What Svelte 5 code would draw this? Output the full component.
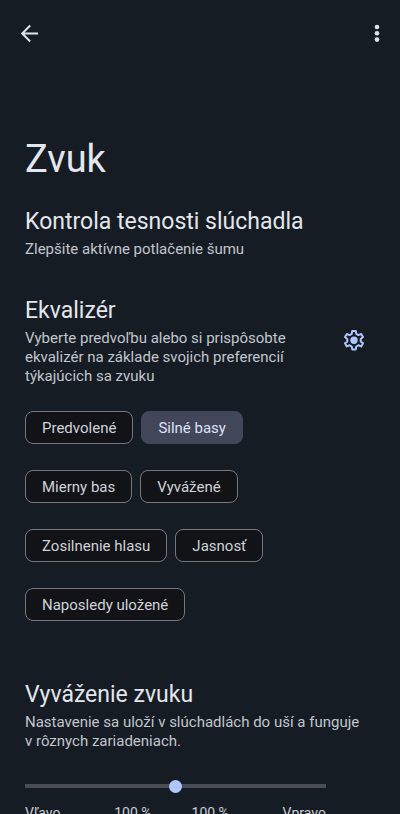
<script lang="ts">
  const presets = [
    'Predvolené',
    'Silné basy',
    'Mierny bas',
    'Vyvážené',
    'Zosilnenie hlasu',
    'Jasnosť',
    'Naposledy uložené',
  ]

  let selected = $state('Silné basy')
  let balance = $state(50)

  let left = $derived(Math.min(100, (100 - balance) * 2))
  let right = $derived(Math.min(100, balance * 2))
</script>

<div class="screen">
  <header class="bar">
    <button class="icon" aria-label="Späť">
      <svg viewBox="0 0 24 24" width="24" height="24" fill="none" stroke="currentColor" stroke-width="2">
        <path d="M20 12.5H4.5M12.2 4.5l-8 8 8 8" />
      </svg>
    </button>
    <button class="icon" aria-label="Ďalšie možnosti">
      <svg viewBox="0 0 24 24" width="24" height="24" fill="currentColor">
        <circle cx="12" cy="6" r="2.3" />
        <circle cx="12" cy="12.3" r="2.3" />
        <circle cx="12" cy="18.6" r="2.3" />
      </svg>
    </button>
  </header>

  <main>
    <h1>Zvuk</h1>

    <section class="seal">
      <h2>Kontrola tesnosti slúchadla</h2>
      <p>Zlepšite aktívne potlačenie šumu</p>
    </section>

    <section class="equalizer">
      <div class="row">
        <div class="text">
          <h2>Ekvalizér</h2>
          <p>Vyberte predvoľbu alebo si prispôsobte ekvalizér na základe svojich preferencií týkajúcich sa zvuku</p>
        </div>
        <button class="icon gear" aria-label="Nastavenia ekvalizéra">
          <svg viewBox="0 0 24 24" width="24" height="24">
            <path
              fill="none" stroke="currentColor" stroke-width="2" stroke-linejoin="round"
              d="M10.2 2h3.6l.5 2.9 2.1 1.2 2.8-1.1 1.8 3.1-2.3 1.9v2.4l2.3 1.9-1.8 3.1-2.8-1.1-2.1 1.2-.5 2.9h-3.6l-.5-2.9-2.1-1.2-2.8 1.1L3 14.3l2.3-1.9V10L3 8.1 4.8 5l2.8 1.1 2.1-1.2z"
            />
            <circle cx="12" cy="11.2" r="3.7" fill="currentColor" />
          </svg>
        </button>
      </div>
      <div class="chips">
        {#each presets as preset}
          <button
            class="chip"
            class:selected={preset === selected}
            aria-pressed={preset === selected}
            onclick={() => selected = preset}
          >{preset}</button>
        {/each}
      </div>
    </section>

    <section class="balance">
      <h2 id="balance-title">Vyváženie zvuku</h2>
      <p>Nastavenie sa uloží v slúchadlách do uší a funguje v&nbsp;rôznych zariadeniach.</p>
      <div class="slider">
        <input type="range" min="0" max="100" bind:value={balance} aria-labelledby="balance-title" />
        <div class="scale">
          <span>Vľavo</span>
          <span class="values">
            <span>{left} %</span>
            <span>{right} %</span>
          </span>
          <span>Vpravo</span>
        </div>
      </div>
    </section>
  </main>
</div>

<style>
  :global(body) {
    background: #161c23;
  }
  .screen {
    box-sizing: border-box;
    height: 100vh;
    overflow-y: auto;
    scrollbar-width: none;
    background: #161c23;
    color: #e3e6ed;
    font-family: Roboto, 'Noto Sans', sans-serif;
  }
  .bar {
    display: flex;
    justify-content: space-between;
    padding: 21px 11px 0 18px;
  }
  .icon {
    display: flex;
    padding: 0;
    border: 0;
    background: none;
    color: #dde3ea;
    cursor: pointer;
  }
  main {
    padding: 90px 24px 24px 25px;
  }
  h1, h2, p { margin: 0; }
  h1 {
    font-size: 38px;
    line-height: 48px;
    font-weight: 400;
  }
  h2 {
    font-size: 23px;
    line-height: 30px;
    font-weight: 400;
  }
  p {
    margin-top: 3px;
    font-size: 15px;
    line-height: 19px;
    color: #c1c6ce;
  }
  .seal { margin-top: 24px; }
  .equalizer { margin-top: 37px; }
  .row {
    display: flex;
    align-items: center;
    justify-content: space-between;
    padding-right: 10px;
  }
  .text { max-width: 276px; }
  .gear { color: #b0c6ff; }
  .chips {
    display: flex;
    flex-wrap: wrap;
    gap: 26px 8px;
    margin-top: 25px;
    padding-right: 24px;
  }
  .chip {
    height: 33px;
    padding: 0 16px;
    border: 1px solid #75777d;
    border-radius: 8px;
    background: #111317;
    color: #d0d2d8;
    font: 400 15px/20px Roboto, 'Noto Sans', sans-serif;
    white-space: nowrap;
    cursor: pointer;
  }
  .chip.selected {
    border-color: #414659;
    background: #414659;
    color: #dde2f9;
  }
  .balance { margin-top: 59px; }
  .slider {
    margin: 25px 50px 0 0;
  }
  input {
    display: block;
    appearance: none;
    width: 100%;
    height: 20px;
    margin: 0;
    background: linear-gradient(#4a4e54, #4a4e54) center / 100% 4px no-repeat;
    cursor: pointer;
  }
  input::-webkit-slider-thumb {
    appearance: none;
    width: 13px;
    height: 13px;
    border-radius: 50%;
    background: #b0c6ff;
  }
  .scale {
    display: flex;
    justify-content: space-between;
    margin-top: 8px;
    font-size: 14px;
    line-height: 18px;
    color: #c9cdd4;
  }
  .values {
    display: flex;
    gap: 40px;
  }
</style>
